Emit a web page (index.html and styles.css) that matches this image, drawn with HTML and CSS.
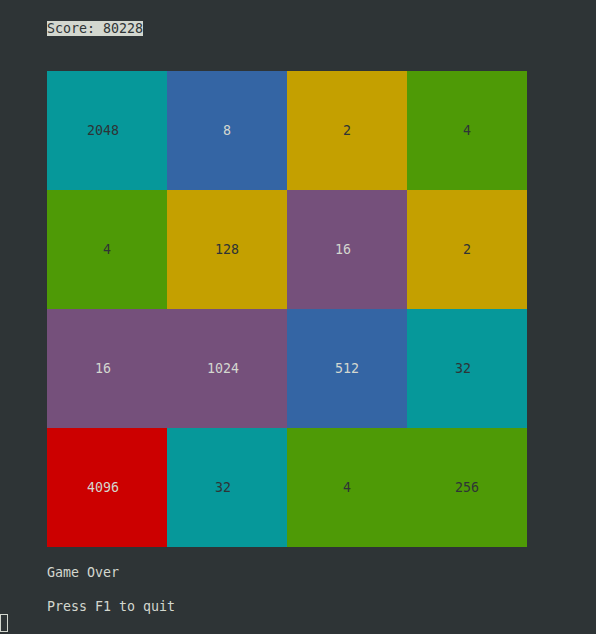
FILE: index.html
```html
<!DOCTYPE html>
<html>
<head>
<meta charset="utf-8">
<link rel="stylesheet" href="styles.css">
</head>
<body>
<div class="term">
  <div class="line pad"><span class="score">Score: 80228</span></div>
  <div class="line"></div>
  <div class="line"></div>
  <div class="board pad">
    <div class="cell teal l4">2048</div>
    <div class="cell blue l1">8</div>
    <div class="cell yellow l1">2</div>
    <div class="cell green l1">4</div>

    <div class="cell green l1">4</div>
    <div class="cell yellow l3">128</div>
    <div class="cell purple l2">16</div>
    <div class="cell yellow l1">2</div>

    <div class="cell purple l2">16</div>
    <div class="cell purple l4">1024</div>
    <div class="cell blue l3">512</div>
    <div class="cell teal l2">32</div>

    <div class="cell red l4">4096</div>
    <div class="cell teal l2">32</div>
    <div class="cell green l1">4</div>
    <div class="cell green l3">256</div>
  </div>
  <div class="line"></div>
  <div class="line pad">Game Over</div>
  <div class="line"></div>
  <div class="line pad">Press F1 to quit</div>
  <div class="line"><span class="cursor"></span></div>
</div>
</body>
</html>
```
FILE: styles.css
```css
html, body {
  margin: 0;
  padding: 0;
  background: #2e3436;
  height: 100%;
  overflow: hidden;
}
.term {
  padding-top: 3px;
  font-family: "DejaVu Sans Mono", "Liberation Mono", monospace;
  font-size: 13.3px;
  line-height: 17px;
  color: #d3d7cf;
}
.line {
  height: 17px;
  white-space: pre;
}
.pad {
  padding-left: 47px;
}
.line:first-child {
  margin-top: 17px;
}
.score {
  background: #d3d7cf;
  color: #2e3436;
}
.board {
  display: grid;
  grid-template-columns: repeat(4, 120px);
  grid-template-rows: repeat(4, 119px);
}
.cell {
  display: flex;
  align-items: center;
  white-space: pre;
  padding-bottom: 0;
  box-sizing: border-box;
  height: 119px;
  line-height: 17px;
}
.l1 { padding-left: 56px; }
.l2 { padding-left: 48px; }
.l3 { padding-left: 48px; }
.l4 { padding-left: 40px; }
.teal { background: #06989a; color: #2e3436; }
.blue { background: #3465a4; color: #d3d7cf; }
.yellow { background: #c4a000; color: #2e3436; }
.green { background: #4e9a06; color: #2e3436; }
.purple { background: #75507b; color: #d3d7cf; }
.red { background: #cc0000; color: #d3d7cf; }
.cursor {
  display: inline-block;
  width: 8px;
  height: 18px;
  box-sizing: border-box;
  border: 1px solid #d3d7cf;
  vertical-align: top;
  margin-top: -1px;
}
```
